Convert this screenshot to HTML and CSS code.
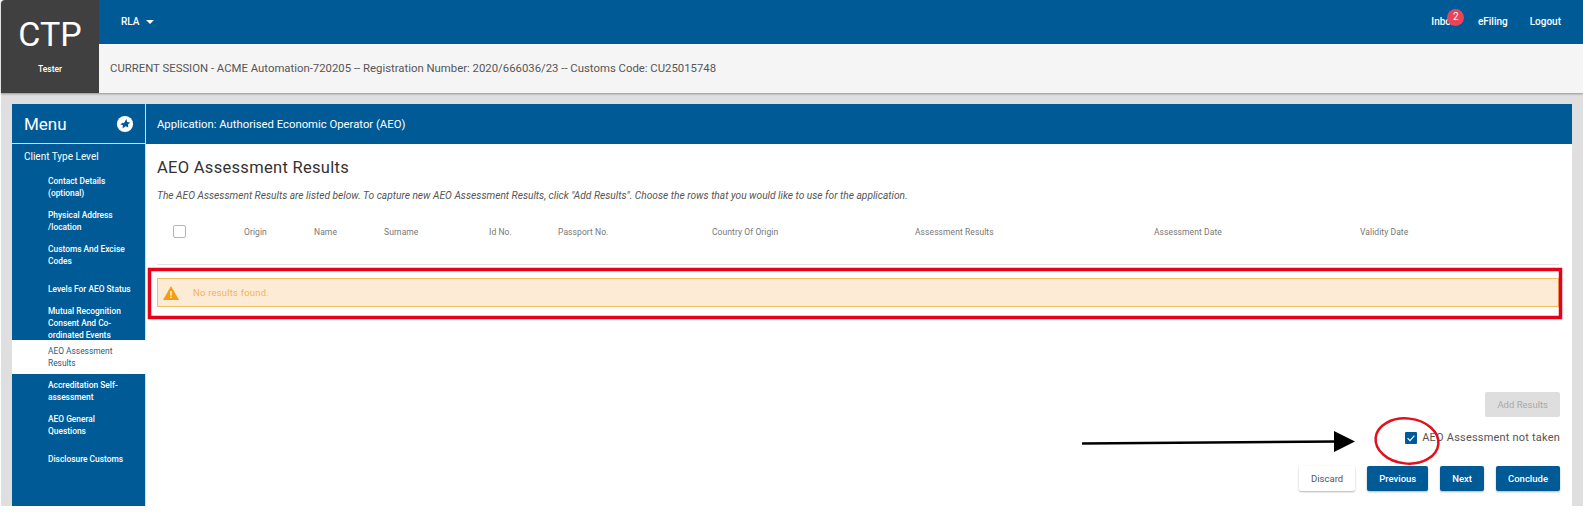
FILE: index.html
```html
<!DOCTYPE html>
<html lang="en">
<head>
<meta charset="utf-8">
<title>AEO Assessment Results</title>
<link rel="stylesheet" href="styles.css">
</head>
<body>
<div class="app">
  <header class="top">
    <div class="logo">
      <div class="logo-title">CTP</div>
      <div class="logo-user">Tester</div>
    </div>
    <div class="top-main">
      <nav class="nav">
        <span class="nav-rla">RLA <i class="caret"></i></span>
        <div class="nav-right">
          <span class="nav-link inbox">Inbox<b class="badge">2</b></span>
          <span class="nav-link">eFiling</span>
          <span class="nav-link">Logout</span>
        </div>
      </nav>
      <div class="session">CURRENT SESSION - ACME Automation-720205 -- Registration Number: 2020/666036/23 -- Customs Code: CU25015748</div>
    </div>
  </header>
  <div class="frame">
    <aside class="side">
      <div class="side-head">
        <span>Menu</span>
        <svg class="side-icon" viewBox="0 0 20 20"><circle cx="10" cy="10" r="9" fill="#fff"/><path d="M11.500 4.400l.9 3.300 3.300.6-2.400 2.300.3 3.300-3-1.500-3.400 2.600.5-3.500-3-1.200 3.100-1.700 1 .5z" fill="#005a96"/></svg>
      </div>
      <div class="side-group">Client Type Level</div>
      <ul class="side-list">
        <li>Contact Details (optional)</li>
        <li>Physical Address /location</li>
        <li>Customs And Excise Codes</li>
        <li>Levels For AEO Status</li>
        <li>Mutual Recognition Consent And Co-ordinated Events</li>
        <li class="active">AEO Assessment Results</li>
        <li>Accreditation Self-assessment</li>
        <li>AEO General Questions</li>
        <li>Disclosure Customs</li>
      </ul>
    </aside>
    <main class="main">
      <div class="main-head">Application: Authorised Economic Operator (AEO)</div>
      <div class="body">
        <h1 class="title">AEO Assessment Results</h1>
        <p class="intro">The AEO Assessment Results are listed below. To capture new AEO Assessment Results, click "Add Results". Choose the rows that you would like to use for the application.</p>
        <div class="thead">
          <span class="box"></span>
          <span>Origin</span><span>Name</span><span>Surname</span><span>Id No.</span><span>Passport No.</span><span>Country Of Origin</span><span>Assessment Results</span><span>Assessment Date</span><span>Validity Date</span>
        </div>
        <div class="alert">
          <svg class="alert-icon" viewBox="0 0 16 14"><path d="M8 0L16 14H0z" fill="#f59d12"/><rect x="7.300" y="5" width="1.400" height="4.600" fill="#fff"/><rect x="7.300" y="10.600" width="1.400" height="1.500" fill="#fff"/></svg>
          <span>No results found.</span>
        </div>
        <div class="actions">
          <button class="btn disabled">Add Results</button>
          <label class="check"><span class="checked"><svg viewBox="0 0 12 12"><path d="M2.600 6.200l2.400 2.400 4.400-5" fill="none" stroke="#fff" stroke-width="1.200"/></svg></span>AEO Assessment not taken</label>
          <div class="buttons">
            <button class="btn plain">Discard</button>
            <button class="btn">Previous</button>
            <button class="btn">Next</button>
            <button class="btn">Conclude</button>
          </div>
        </div>
      </div>
    </main>
  </div>
  <svg class="notes" viewBox="0 0 1583 512" width="1583" height="512">
    <rect x="149.500" y="269.500" width="1411" height="48" fill="none" stroke="#e6001a" stroke-width="3.500"/>
    <ellipse cx="1407" cy="441" rx="31.500" ry="22.500" transform="rotate(6 1407 441)" fill="none" stroke="#e2101c" stroke-width="2.500"/>
    <path d="M1082 443.500L1337 441.500" stroke="#000" stroke-width="2.500"/>
    <path d="M1334 431L1355 441.500L1334 452z" fill="#000"/>
  </svg>
</div>
</body>
</html>
```
FILE: styles.css
```css
* { box-sizing: border-box; }
html, body { margin: 0; padding: 0; background: #fff; }
body { font-family: Roboto, "Liberation Sans", sans-serif; overflow: hidden; }
.app { position: relative; width: 1583px; height: 512px; overflow: hidden; }

.top { display: flex; height: 93px; margin-left: 1px; position: relative; z-index: 1; box-shadow: 0 1px 2px rgba(0,0,0,.35); }
.logo { width: 98px; background: #404040; color: #fff; text-align: center; border-top-left-radius: 4px; }
.logo-title { font-size: 34px; line-height: 40px; padding-top: 14px; font-weight: 400; }
.logo-user { font-size: 8.500px; line-height: 12px; margin-top: 9px; font-weight: 500; }
.top-main { flex: 1; display: flex; flex-direction: column; }
.nav { height: 44px; background: #005a96; display: flex; align-items: center; justify-content: space-between; padding: 0 22px 1px 22px; color: #fff; font-size: 10px; font-weight: 500; }
.nav-rla { display: flex; align-items: center; gap: 7px; }
.caret { width: 0; height: 0; border: 4.500px solid transparent; border-top-color: #fff; border-bottom: 0; }
.nav-right { display: flex; gap: 22px; }
.inbox { position: relative; }
.badge { position: absolute; left: 16px; top: -7px; width: 17px; height: 17px; border-radius: 50%; background: #ea4458; font-size: 10px; font-weight: 400; line-height: 16px; text-align: center; }
.session { flex: 1; background: #f5f5f5; display: flex; align-items: center; padding: 0 0 2px 11px; font-size: 11.350px; color: #555; }

.frame { height: 413px; margin-left: 1px; background: #dfdfdf; padding: 11px 11px 0; display: flex; }
.side { width: 134px; background: #005a96; color: #fff; border-right: 1px solid #cfe0ec; flex: none; }
.side-head { height: 40px; border-bottom: 1px solid #cfe0ec; display: flex; align-items: center; justify-content: space-between; padding: 0 11px 0 12px; font-size: 17px; font-weight: 400; }
.side-icon { width: 18px; height: 18px; }
.side-group { height: 26px; line-height: 26px; padding-left: 12px; font-size: 10px; font-weight: 400; }
.side-list { list-style: none; margin: 0; padding: 0; }
.side-list li { height: 34px; line-height: 12px; padding: 0 12px 0 36px; font-size: 8.400px; font-weight: 500; display: flex; align-items: center; }
.side-list .active { background: #fff; color: #2a5d80; font-weight: 400; margin-right: -1px; }

.main { flex: 1; background: #fff; display: flex; flex-direction: column; }
.main-head { height: 40px; background: #005a96; color: #fff; display: flex; align-items: center; padding-left: 11px; font-size: 11.300px; }
.body { flex: 1; padding: 0 13px 0 11px; display: flex; flex-direction: column; }
.title { margin: 14px 0 0; font-size: 16.500px; line-height: 20px; font-weight: 400; color: #333; letter-spacing: .3px; }
.intro { margin: 11px 0 0; font-size: 10.200px; line-height: 14px; font-style: italic; color: #555; }
.thead { margin-top: 4px; height: 58px; padding: 0 0 8px 16px; border-bottom: 1px solid #e2e2e2; display: grid; grid-template-columns: 71px 70px 70px 105px 69px 154px 203px 239px 206px 1fr; align-items: center; font-size: 8.500px; color: #777; letter-spacing: .08px; }
.box { width: 13px; height: 13px; border: 1px solid #b5b5b5; border-radius: 2px; }
.alert { margin-top: 13px; height: 29px; flex: none; display: flex; align-items: center; gap: 14px; padding-left: 5px; background: #fdebd6; border: 1px solid #f5bd64; color: #f9b05a; font-size: 9.500px; letter-spacing: .2px; }
.alert-icon { width: 16px; height: 14px; }
.actions { margin: 85px -1px 0 0; display: flex; flex-direction: column; align-items: flex-end; }
.btn { height: 25px; padding: 0 12px; border: 0; border-radius: 2px; background: #005a96; color: #fff; font: 500 9.500px Roboto, sans-serif; box-shadow: 0 1px 2px rgba(0,0,0,.3); }
.disabled { background: #dedede; color: #a9a9a9; font-weight: 400; box-shadow: none; }
.check { margin-top: 15px; display: flex; align-items: center; gap: 5px; font-size: 11px; line-height: 12px; color: #555; letter-spacing: .2px; }
.checked { width: 12px; height: 12px; border-radius: 1px; background: #005a96; display: block; }
.checked svg { display: block; width: 12px; height: 12px; }
.buttons { margin-top: 22px; display: flex; gap: 12px; }
.plain { background: #fff; color: #555; font-weight: 400; }

.notes { position: absolute; left: 0; top: 0; z-index: 2; pointer-events: none; }
```
